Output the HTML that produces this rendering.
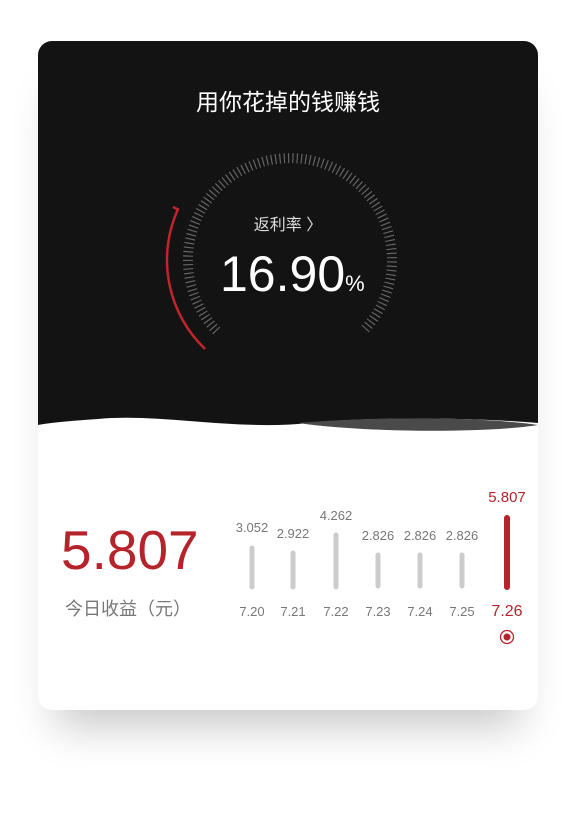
<!DOCTYPE html>
<html><head><meta charset="utf-8"><style>
body{margin:0;width:580px;height:820px;background:#fff;position:relative;overflow:hidden;font-family:"Liberation Sans","Noto Sans CJK SC",sans-serif}
.card{position:absolute;left:38px;top:41px;width:500px;height:669px;background:#fff;border-radius:14px;box-shadow:0 34px 40px -18px rgba(0,0,0,0.22);overflow:hidden}
.t{position:absolute;white-space:nowrap}
</style></head><body>
<div class="card">
<svg width="500" height="400" style="position:absolute;left:0;top:0">
<path d="M0 0 H500 V382 C430 376 330 376 270 382 C200 390 120 372 60 378 C30 380 10 382 0 384 Z" fill="#131313"/>
<path d="M260 382 C330 376 440 375 500 384 C450 392 330 392 260 382 Z" fill="#4a4a4a"/>
</svg>
<svg width="500" height="400" style="position:absolute;left:0;top:0">
<g transform="translate(-38,-41)">
<path d="M216.6 330.9 A102 102 0 1 1 363.4 330.9" fill="none" stroke="#6a6a6a" stroke-width="10" stroke-dasharray="1.1 3.2"/>
<path d="M177.9 209.4 A123 123 0 0 0 205.1 349" fill="none" stroke="#c0242c" stroke-width="2.5"/>
<path d="M173 207 L179 210" stroke="#c0242c" stroke-width="2.5"/>
</g></svg>
<div class="t" style="left:0;width:500px;text-align:center;top:42px;font-size:23px;color:#fff">用你花掉的钱赚钱</div>
<div class="t" style="left:0;width:500px;text-align:center;top:170px;font-size:16px;color:#ddd">返利率 〉</div>
<div class="t" style="left:182px;top:204px;font-size:50px;color:#fff">16.90<span style="font-size:22px">%</span></div>
<div class="t" style="left:23px;top:477px;font-size:55px;color:#b5232b">5.807</div>
<div class="t" style="left:27px;top:554px;font-size:18px;color:#777">今日收益（元）</div>
</div>
<svg width="580" height="820" style="position:absolute;left:0;top:0" font-family="Liberation Sans, sans-serif" font-size="13" text-anchor="middle">
<g stroke="#ccc" stroke-width="5" stroke-linecap="round">
<line x1="252" y1="548" x2="252" y2="587"/><line x1="293" y1="553" x2="293" y2="587"/><line x1="336" y1="535" x2="336" y2="587"/><line x1="378" y1="555" x2="378" y2="586"/><line x1="420" y1="555" x2="420" y2="586"/><line x1="462" y1="555" x2="462" y2="586"/></g>
<line x1="507" y1="518" x2="507" y2="587" stroke="#b5232b" stroke-width="6" stroke-linecap="round"/>
<g fill="#777"><text x="252" y="532">3.052</text><text x="293" y="538">2.922</text><text x="336" y="520">4.262</text><text x="378" y="540">2.826</text><text x="420" y="540">2.826</text><text x="462" y="540">2.826</text>
<text x="252" y="616">7.20</text><text x="293" y="616">7.21</text><text x="336" y="616">7.22</text><text x="378" y="616">7.23</text><text x="420" y="616">7.24</text><text x="462" y="616">7.25</text></g>
<text x="507" y="502" fill="#b5232b" font-size="15">5.807</text>
<text x="507" y="616" fill="#b5232b" font-size="16">7.26</text>
<circle cx="507" cy="637" r="6.5" fill="none" stroke="#b5232b" stroke-width="1.3"/><circle cx="507" cy="637" r="3.5" fill="#b5232b"/>
</svg>
</body></html>
